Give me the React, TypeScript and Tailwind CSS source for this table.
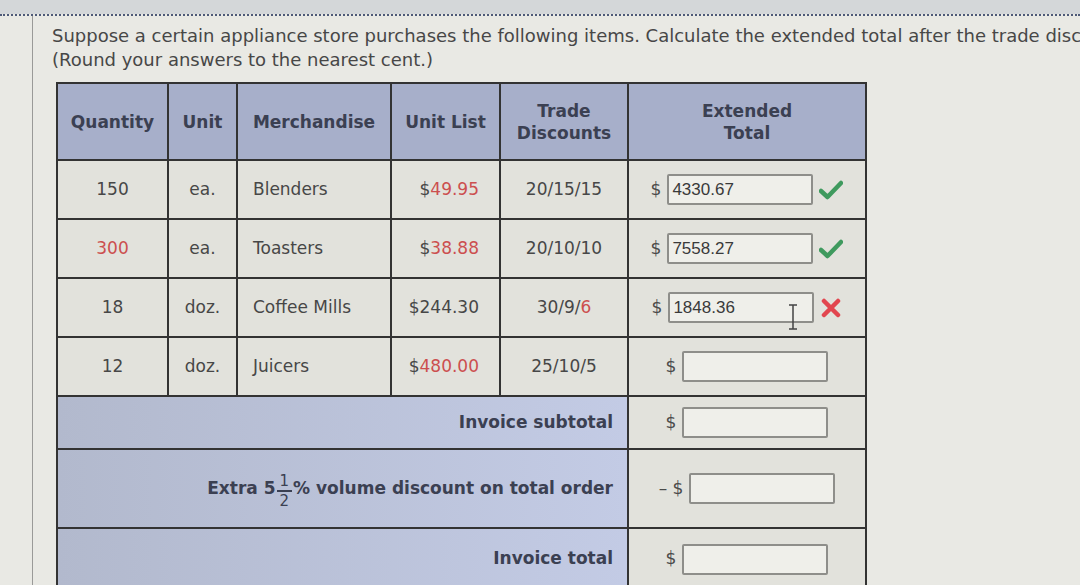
import type { ReactNode } from 'react'

type Row = {
  qty: ReactNode
  unit: string
  item: string
  list: ReactNode
  trade: ReactNode
  value: string
  status: 'ok' | 'bad' | 'none'
}

const red = 'text-[#cc4f4f]'

const rows: Row[] = [
  { qty: '150', unit: 'ea.', item: 'Blenders', list: <>$<span className={red}>49.95</span></>, trade: '20/15/15', value: '4330.67', status: 'ok' },
  { qty: <span className={red}>300</span>, unit: 'ea.', item: 'Toasters', list: <>$<span className={red}>38.88</span></>, trade: '20/10/10', value: '7558.27', status: 'ok' },
  { qty: '18', unit: 'doz.', item: 'Coffee Mills', list: '$244.30', trade: <>30/9/<span className={red}>6</span></>, value: '1848.36', status: 'bad' },
  { qty: '12', unit: 'doz.', item: 'Juicers', list: <>$<span className={red}>480.00</span></>, trade: '25/10/5', value: '', status: 'none' },
]

function Check() {
  return (
    <svg width="24" height="20" viewBox="0 0 24 20">
      <path d="M2 11 L8.5 17 L22 3" fill="none" stroke="#3f9a5e" strokeWidth="4.5" strokeLinecap="round" strokeLinejoin="round" />
    </svg>
  )
}

function Cross() {
  return (
    <svg width="22" height="20" viewBox="0 0 22 20">
      <path d="M4 3 L18 17 M18 3 L4 17" fill="none" stroke="#e2464f" strokeWidth="4.5" strokeLinecap="round" />
    </svg>
  )
}

function Answer({ value, status, prefix = '$' }: { value: string; status: Row['status']; prefix?: string }) {
  return (
    <div className="flex items-center justify-center gap-[6px]">
      <span className="text-[#4a4a4a]">{prefix}</span>
      <div className="relative flex h-[31px] w-[146px] items-center rounded-[2px] border-2 border-[#8e8e8a] bg-[#efefea] pl-[3px] font-['Liberation_Sans',Arial,sans-serif] text-[17px] text-[#3a3a3a]">
        {value}
        {status === 'bad' && (
          <svg className="absolute right-[14px] top-[10px]" width="10" height="26" viewBox="0 0 10 26">
            <path d="M1 1 H9 M5 1 V25 M1 25 H9" stroke="#444" strokeWidth="1.5" fill="none" />
          </svg>
        )}
      </div>
      {status === 'ok' && <Check />}
      {status === 'bad' && <Cross />}
    </div>
  )
}

const cell = 'border-2 border-[#333]'
const summary = `${cell} bg-gradient-to-r from-[#b2b9cd] to-[#c3cbe5] pr-[14px] text-right font-bold text-[#3b4052]`

export default function App() {
  return (
    <div className="h-[585px] w-[1080px] overflow-hidden bg-[#e9e9e4] font-['DejaVu_Sans',Verdana,sans-serif]">
      <div className="h-[14px] bg-[#d4d7d9]" />
      <div className="flex h-full border-t-2 border-dotted border-[#4e5a78]">
        <div className="w-[33px] shrink-0 border-r border-[#9a9a98]" />
        <div className="min-w-0 overflow-hidden pl-[19px] pt-[8px]">
          <p className="whitespace-nowrap text-[18px] leading-[24px] text-[#474747]">
            Suppose a certain appliance store purchases the following items. Calculate the extended total after the trade discounts.
            <br />
            (Round your answers to the nearest cent.)
          </p>

          <table className="ml-[4px] mt-[10px] w-[809px] table-fixed border-collapse text-[17px] text-[#474747]">
            <colgroup>
              <col className="w-[111px]" />
              <col className="w-[69px]" />
              <col className="w-[154px]" />
              <col className="w-[109px]" />
              <col className="w-[128px]" />
              <col className="w-[238px]" />
            </colgroup>
            <thead>
              <tr className="h-[77px] bg-[#a7afca] font-bold leading-[22px] text-[#3b4052]">
                <th className={cell}>Quantity</th>
                <th className={cell}>Unit</th>
                <th className={cell}>Merchandise</th>
                <th className={cell}>Unit List</th>
                <th className={cell}>Trade<br />Discounts</th>
                <th className={cell}>Extended<br />Total</th>
              </tr>
            </thead>
            <tbody>
              {rows.map((r) => (
                <tr key={r.item} className="h-[59px] bg-[#e2e2dc]">
                  <td className={`${cell} text-center`}>{r.qty}</td>
                  <td className={`${cell} text-center`}>{r.unit}</td>
                  <td className={`${cell} pl-[15px]`}>{r.item}</td>
                  <td className={`${cell} pr-[20px] text-right`}>{r.list}</td>
                  <td className={`${cell} text-center`}>{r.trade}</td>
                  <td className={cell}>
                    <Answer value={r.value} status={r.status} />
                  </td>
                </tr>
              ))}
              <tr className="h-[53px]">
                <td colSpan={5} className={summary}>Invoice subtotal</td>
                <td className={`${cell} bg-[#e2e2dc]`}><Answer value="" status="none" /></td>
              </tr>
              <tr className="h-[79px]">
                <td colSpan={5} className={summary}>
                  Extra 5
                  <span className="mx-[1px] inline-flex translate-y-[2px] flex-col items-center align-middle text-[15px] font-normal leading-[18px]">
                    <span className="border-b-2 border-[#3b4052] px-[3px]">1</span>
                    <span>2</span>
                  </span>
                  % volume discount on total order
                </td>
                <td className={`${cell} bg-[#e2e2dc]`}><Answer value="" status="none" prefix="– $" /></td>
              </tr>
              <tr className="h-[62px]">
                <td colSpan={5} className={summary}>Invoice total</td>
                <td className={`${cell} bg-[#e2e2dc]`}><Answer value="" status="none" /></td>
              </tr>
            </tbody>
          </table>
        </div>
      </div>
    </div>
  )
}
